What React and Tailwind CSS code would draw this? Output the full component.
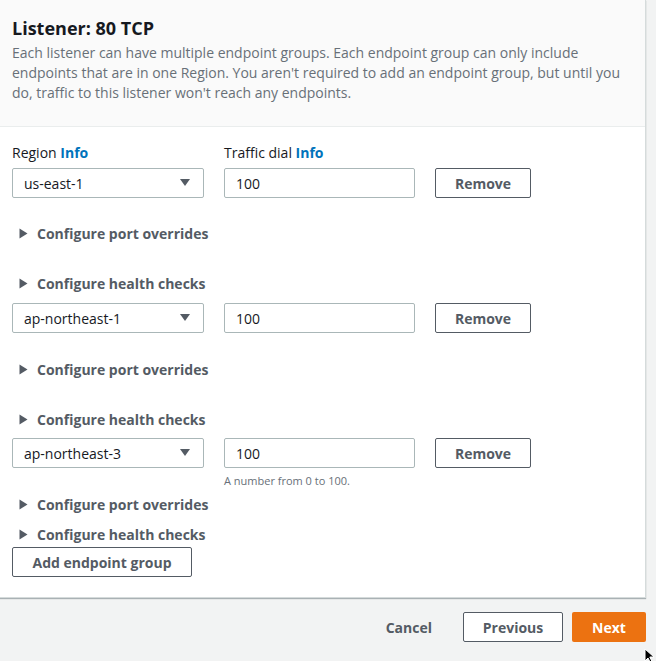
import React from "react";

const font = { fontFamily: '"Open Sans", "Noto Sans", Arial, sans-serif' };

function Caret({ className = "" }) {
  return (
    <svg width="12" height="10" viewBox="0 0 12 10" className={className}>
      <path d="M1 1h10L6 8z" fill="#545b64" />
    </svg>
  );
}

function Expander({ label, className = "" }) {
  return (
    <div className={`flex h-5 items-center gap-[9px] pl-[7px] ${className}`}>
      <svg width="9" height="11" viewBox="0 0 9 11">
        <path d="M0.5 0.5v10l8-5z" fill="#545b64" />
      </svg>
      <span className="text-[14px] font-bold text-[#545b64]">{label}</span>
    </div>
  );
}

function EndpointRow({ region, hint }) {
  return (
    <div className="flex items-start">
      <div className="flex h-[30px] w-[192px] items-center justify-between rounded-[2px] border border-[#aab7b8] bg-white pl-[11px] pr-[12px] text-[14px] text-[#16191f]">
        <span>{region}</span>
        <Caret />
      </div>
      <div className="ml-[20px] w-[191px]">
        <div className="flex h-[30px] items-center rounded-[2px] border border-[#aab7b8] bg-white px-[11px] text-[14px] text-[#16191f]">
          100
        </div>
        {hint && (
          <p className="mt-[5px] text-[11px] leading-4 text-[#687078]">{hint}</p>
        )}
      </div>
      <button className="ml-[20px] h-[30px] w-[96px] rounded-[2px] border border-[#545b64] bg-white text-[14px] font-bold text-[#545b64]">
        Remove
      </button>
    </div>
  );
}

export default function App() {
  return (
    <div className="relative min-h-[661px] bg-[#f2f3f3] pr-[10px]" style={font}>
      <div className="w-[646px] border-r border-b border-[#d5dbdb] bg-white shadow-[0_1px_1px_rgba(0,28,36,0.3)]">
        <div className="h-[127px] border-b border-[#eaeded] bg-[#fafafa] px-3 pt-[17px]">
          <h2 className="text-[18px] font-bold leading-[22px] text-[#16191f]">
            Listener: 80 TCP
          </h2>
          <p className="mt-1 text-[14px] leading-5 text-[#687078]">
            Each listener can have multiple endpoint groups. Each endpoint group can only include
            endpoints that are in one Region. You aren't required to add an endpoint group, but until you
            do, traffic to this listener won't reach any endpoints.
          </p>
        </div>

        <div className="px-3 pt-[16px] pb-[20px]">
          <div className="flex text-[14px] leading-5 text-[#16191f]">
            <div className="w-[212px]">
              Region <a className="font-bold text-[#0073bb]">Info</a>
            </div>
            <div>
              Traffic dial <a className="font-bold text-[#0073bb]">Info</a>
            </div>
          </div>
          <div className="mt-[5px]">
            <EndpointRow region="us-east-1" />
          </div>
          <Expander label="Configure port overrides" className="mt-[25px]" />
          <Expander label="Configure health checks" className="mt-[30px]" />

          <div className="mt-[10px]">
            <EndpointRow region="ap-northeast-1" />
          </div>
          <Expander label="Configure port overrides" className="mt-[26px]" />
          <Expander label="Configure health checks" className="mt-[30px]" />

          <div className="mt-[9px]">
            <EndpointRow region="ap-northeast-3" hint="A number from 0 to 100." />
          </div>
          <Expander label="Configure port overrides" className="mt-[5px]" />
          <Expander label="Configure health checks" className="mt-[10px]" />

          <button className="mt-[3px] h-[30px] w-[180px] rounded-[2px] border border-[#545b64] bg-white text-[14px] font-bold text-[#545b64]">
            Add endpoint group
          </button>
        </div>
      </div>

      <div className="mt-[14px] flex items-center justify-end">
        <button className="mr-[31px] text-[14px] font-bold text-[#545b64]">Cancel</button>
        <button className="h-[30px] w-[100px] rounded-[2px] border border-[#545b64] bg-white text-[14px] font-bold text-[#545b64]">
          Previous
        </button>
        <button className="ml-[9px] h-[30px] w-[74px] rounded-[2px] bg-[#ec7211] text-[14px] font-bold text-white">
          Next
        </button>
      </div>

      <svg
        width="12"
        height="16"
        viewBox="0 0 12 16"
        className="absolute left-[644px] top-[648px]"
      >
        <path d="M1 1v12l3-3 2.5 5 1.8-.9L5.8 9H10z" fill="#000" stroke="#fff" strokeWidth="1" />
      </svg>
    </div>
  );
}
